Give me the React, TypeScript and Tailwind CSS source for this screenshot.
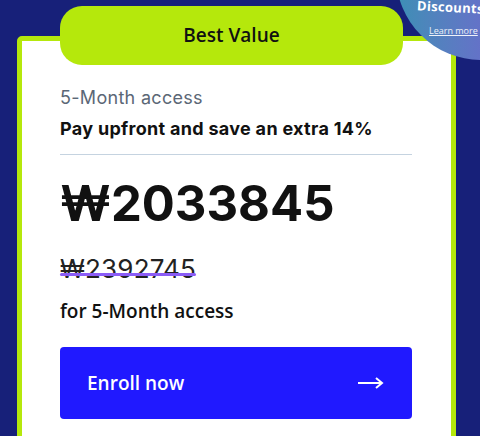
import React from "react";

export default function App() {
  return (
    <div className="relative w-[480px] h-[436px] overflow-hidden bg-[#172079]">
      <div className="ml-[17px] mt-[36px] w-[439px] h-[440px] rounded-[5px] border-[5px] border-[#b5e80c] bg-white pl-[38px] pr-[39px] pt-[45px]">
        <div className="flex flex-col">
          <div className="text-[18px] leading-[24px] tracking-[0.3px] text-[#5b6776] font-['Inter',sans-serif]">5-Month access</div>
          <div className="mt-[7px] text-[18px] leading-[24px] font-bold tracking-[0.3px] text-[#111] font-['Inter',sans-serif]">Pay upfront and save an extra 14%</div>
          <div className="mt-[13px] h-px bg-[#c5d3e0]" />
          <div className="mt-[19px] text-[49px] leading-[60px] font-bold text-[#111] font-['Inter',sans-serif]">₩2033845</div>
          <div className="mt-[20px] flex">
            <span className="relative text-[26px] leading-[30px] tracking-[0.2px] text-[#222] font-['Inter',sans-serif]">
              ₩2392745
              <span className="absolute left-0 right-0 top-[19px] h-[3px] rounded-full bg-[#8b5cf6]" />
            </span>
          </div>
          <div className="mt-[15px] text-[19px] leading-[24px] font-semibold text-[#111] font-['Open_Sans',sans-serif]">for 5-Month access</div>
          <button className="mt-[24px] flex h-[72px] items-center justify-between rounded-[4px] bg-[#2019ff] pl-[27px] pr-[28px] text-white">
            <span className="text-[19px] font-semibold font-['Open_Sans',sans-serif]">Enroll now</span>
            <svg width="26" height="12" viewBox="0 0 26 12" fill="none" stroke="white" strokeWidth="2">
              <line x1="0" y1="6" x2="24" y2="6" />
              <polyline points="18,1 24,6 18,11" fill="none" />
            </svg>
          </button>
        </div>
      </div>

      <div className="absolute left-[396px] top-[-110px] h-[170px] w-[170px] rounded-full bg-gradient-to-r from-[#3b8fb5] to-[#7b4cd9]">
        <div className="absolute left-[21px] top-[108px] whitespace-nowrap text-[13px] font-bold tracking-[0.3px] text-white font-['Open_Sans',sans-serif] rotate-[3deg]">Discounts</div>
        <div className="absolute left-[33px] top-[134px] whitespace-nowrap text-[9px] underline text-white/90 font-['Open_Sans',sans-serif]">Learn more</div>
      </div>

      <div className="absolute left-[60px] top-[6px] flex h-[59px] w-[343px] items-center justify-center rounded-[22px] bg-[#b5e80c]">
        <span className="text-[19px] font-semibold text-[#111] font-['Open_Sans',sans-serif]">Best Value</span>
      </div>
    </div>
  );
}
